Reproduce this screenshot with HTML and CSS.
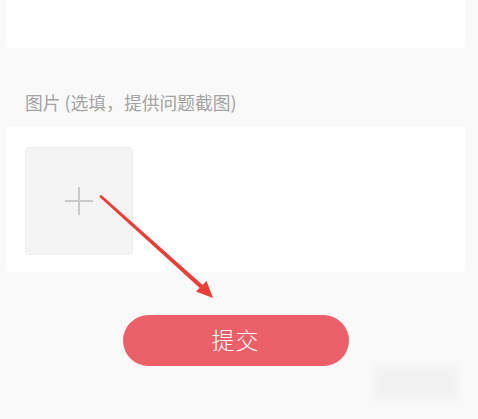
FILE: index.html
```html
<!DOCTYPE html>
<html lang="zh-CN">
<head>
    <meta charset="UTF-8">
    <meta name="viewport" content="width=device-width, initial-scale=1.0">
    <title>意见反馈</title>
    <link rel="stylesheet" href="styles.css">
</head>
<body>
    <main class="page">
        <section class="card text-card"></section>

        <h2 class="field-label">图片 (选填，提供问题截图)</h2>

        <section class="card upload-card">
            <div class="upload-box">
                <svg class="plus" width="30" height="30" viewBox="0 0 30 30">
                    <path d="M15 1v28M1 15h28" stroke="#c9c9c9" stroke-width="2" fill="none"/>
                </svg>
            </div>
        </section>

        <div class="actions">
            <button class="submit-btn">提交</button>
        </div>

        <!-- annotation arrow drawn over the screenshot -->
        <svg class="arrow" width="478" height="419" viewBox="0 0 478 419">
            <path d="M100 195 L102 195.5 L205.5 287.5 L202.5 290.5 L99.5 197 Z" fill="#ea3f38"/>
            <path d="M213 298 L196 291.5 L206.5 281 Z" fill="#ea3f38"/>
        </svg>
        <div class="blur-patch"></div>
    </main>
</body>
</html>
```

FILE: styles.css
```css
* {
    margin: 0;
    padding: 0;
    box-sizing: border-box;
}

body {
    background-color: #f9f9f9;
    font-family: "Noto Sans CJK SC", "Noto Sans", sans-serif;
    width: 478px;
    height: 419px;
    overflow: hidden;
}

.page {
    position: relative;
    height: 419px;
    padding: 0 13px 0 6px;
}

.card {
    background: #ffffff;
    border-radius: 3px;
}

.text-card {
    height: 48px;
    border-top-left-radius: 0;
    border-top-right-radius: 0;
}

.field-label {
    font-size: 17.8px;
    font-weight: normal;
    color: #a3a3a3;
    line-height: 24px;
    padding: 42px 0 0 19px;
    height: 79px;
}

.upload-card {
    height: 145px;
    padding: 20px 19px;
}

.upload-box {
    width: 108px;
    height: 108px;
    background: #f4f4f4;
    border: 1px solid #ececec;
    border-radius: 4px;
    display: flex;
    align-items: center;
    justify-content: center;
}

.actions {
    display: flex;
    justify-content: center;
    padding-top: 43px;
}

.submit-btn {
    width: 226px;
    height: 51px;
    border: none;
    border-radius: 26px;
    background-color: #eb5f68;
    color: #ffffff;
    font-family: "Noto Sans CJK SC", sans-serif;
    font-size: 23px;
    font-weight: 300;
    letter-spacing: 1px;
    padding-bottom: 3px;
    cursor: pointer;
}

.arrow {
    position: absolute;
    top: 0;
    left: 0;
    pointer-events: none;
}

.blur-patch {
    position: absolute;
    left: 374px;
    top: 366px;
    width: 84px;
    height: 34px;
    background: #f2f2f2;
    filter: blur(3px);
}
```
